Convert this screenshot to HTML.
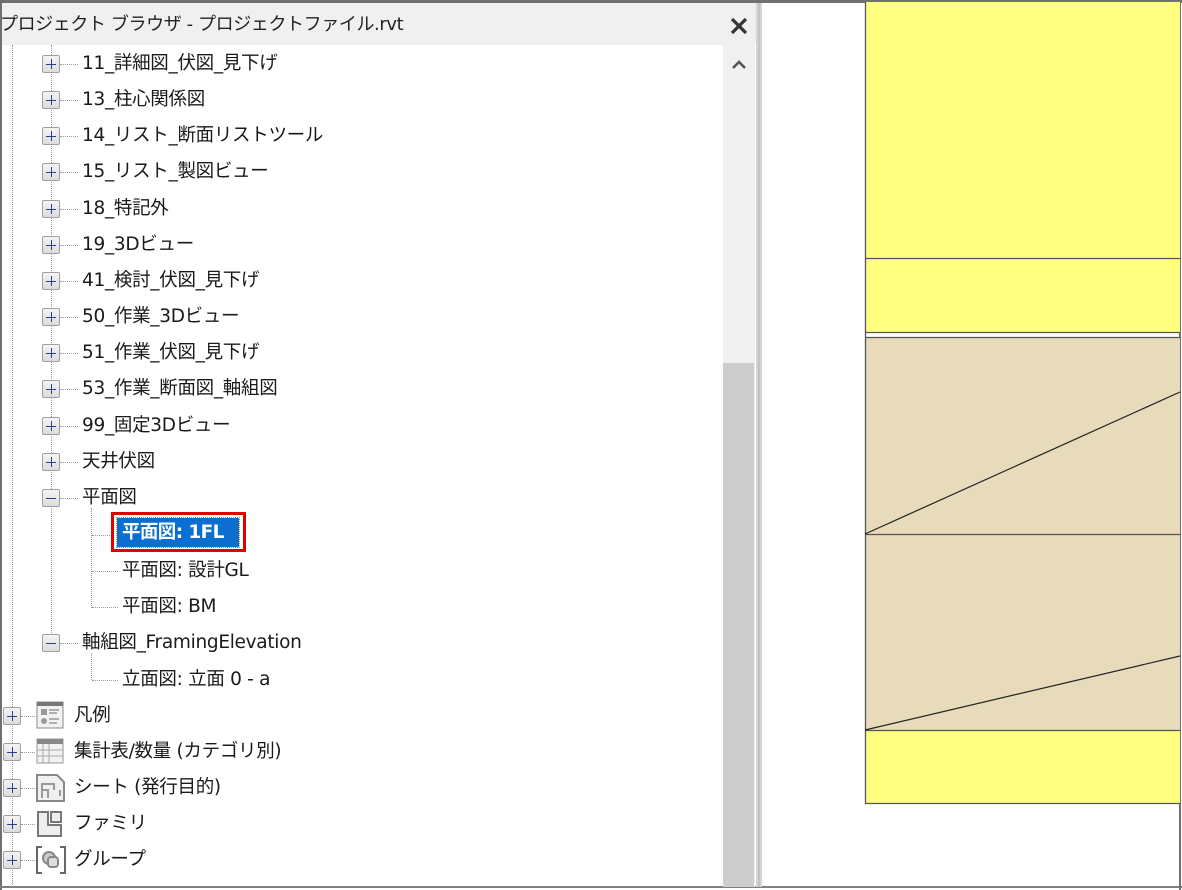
<!DOCTYPE html>
<html><head><meta charset="utf-8">
<style>
*{margin:0;padding:0;box-sizing:border-box}
body{width:1182px;height:890px;overflow:hidden;background:#fff;position:relative;font-family:"DejaVu Sans","Noto Sans CJK JP",sans-serif;color:#1a1a1a}
.a{position:absolute}
.t{position:absolute;font-size:18.5px;letter-spacing:-0.3px;line-height:24px;white-space:nowrap}
.box{position:absolute;width:18px;height:18px;border:1px solid #a0a0a0;border-radius:2px;background:linear-gradient(#f4f4f4,#dcdcdc)}
.box::before{content:"";position:absolute;left:3px;right:3px;top:7.5px;height:1.5px;background:#2b3f8f}
.box.p::after{content:"";position:absolute;top:3px;bottom:3px;left:7.5px;width:1.5px;background:#2b3f8f}
.hd{position:absolute;border-top:1px dotted #999;height:0}
.vd{position:absolute;border-left:1px dotted #999;width:0}
</style></head><body>
<div class="a" style="left:0;top:0;width:1182px;height:3px;background:#707070"></div>
<div class="a" style="left:0;top:0;width:2px;height:890px;background:#707070"></div>
<div class="a" style="left:0;top:886px;width:1182px;height:2px;background:#808080"></div>
<div class="a" style="left:1179px;top:0;width:2px;height:890px;background:#707070"></div>
<div class="a" style="left:2px;top:3px;width:756px;height:42px;background:#f0f0f0"></div>
<div class="t" style="left:0;top:13px;font-size:18px;letter-spacing:-0.4px;color:#222">プロジェクト ブラウザ - プロジェクトファイル.rvt</div>
<svg class="a" style="left:729px;top:16px" width="20" height="20"><path d="M3 3L17 17M17 3L3 17" stroke="#333" stroke-width="3.2"/></svg>
<div class="a" style="left:723px;top:45px;width:32px;height:842px;background:#f0f0f0"></div>
<div class="a" style="left:723px;top:363px;width:31px;height:524px;background:#cdcdcd"></div>
<svg class="a" style="left:730px;top:58px" width="18" height="12"><path d="M3 10L9 4L15 10" stroke="#555" stroke-width="2.6" fill="none"/></svg>
<div class="a" style="left:756px;top:3px;width:6px;height:884px;background:#d4d4d4"></div>
<div class="a" style="left:758px;top:3px;width:2px;height:884px;background:#c4c4c4"></div>
<svg class="a" style="left:864px;top:2px" width="318" height="805">
<rect x="1" y="0" width="315" height="256" fill="#ffff80"/>
<rect x="1" y="256" width="315" height="74" fill="#ffff80"/>
<rect x="1" y="335" width="315" height="393" fill="#e8dbbb"/>
<rect x="1" y="728" width="315" height="73" fill="#ffff80"/>
<g stroke="#555" stroke-width="1.3" fill="none">
<line x1="1.5" y1="0" x2="1.5" y2="802"/>
<line x1="1" y1="256.5" x2="316" y2="256.5"/>
<line x1="1" y1="330.5" x2="316" y2="330.5"/>
<line x1="1" y1="335.5" x2="316" y2="335.5"/>
<line x1="1" y1="532.5" x2="316" y2="532.5"/>
<line x1="1" y1="728.5" x2="316" y2="728.5"/>
<line x1="1" y1="801.5" x2="316" y2="801.5"/>
</g>
<g stroke="#222" stroke-width="1.2"><line x1="1" y1="532" x2="316" y2="390"/><line x1="1" y1="728" x2="316" y2="654"/></g>
</svg>

<div class="vd" style="left:12px;top:45px;height:842px"></div>
<div class="vd" style="left:51px;top:45px;height:598px"></div>
<div class="vd" style="left:91px;top:508px;height:100px"></div>
<div class="vd" style="left:91px;top:653px;height:27px"></div>

<div class="box p" style="left:42px;top:55px"></div><div class="hd" style="left:60px;top:64px;width:18px"></div><div class="t" style="left:82px;top:52px">11_詳細図_伏図_見下げ</div>
<div class="box p" style="left:42px;top:91px"></div><div class="hd" style="left:60px;top:100px;width:18px"></div><div class="t" style="left:82px;top:88px">13_柱心関係図</div>
<div class="box p" style="left:42px;top:127px"></div><div class="hd" style="left:60px;top:136px;width:18px"></div><div class="t" style="left:82px;top:124px">14_リスト_断面リストツール</div>
<div class="box p" style="left:42px;top:163px"></div><div class="hd" style="left:60px;top:172px;width:18px"></div><div class="t" style="left:82px;top:160px">15_リスト_製図ビュー</div>
<div class="box p" style="left:42px;top:200px"></div><div class="hd" style="left:60px;top:209px;width:18px"></div><div class="t" style="left:82px;top:197px">18_特記外</div>
<div class="box p" style="left:42px;top:236px"></div><div class="hd" style="left:60px;top:245px;width:18px"></div><div class="t" style="left:82px;top:233px">19_3Dビュー</div>
<div class="box p" style="left:42px;top:272px"></div><div class="hd" style="left:60px;top:281px;width:18px"></div><div class="t" style="left:82px;top:269px">41_検討_伏図_見下げ</div>
<div class="box p" style="left:42px;top:308px"></div><div class="hd" style="left:60px;top:317px;width:18px"></div><div class="t" style="left:82px;top:305px">50_作業_3Dビュー</div>
<div class="box p" style="left:42px;top:344px"></div><div class="hd" style="left:60px;top:353px;width:18px"></div><div class="t" style="left:82px;top:341px">51_作業_伏図_見下げ</div>
<div class="box p" style="left:42px;top:380px"></div><div class="hd" style="left:60px;top:389px;width:18px"></div><div class="t" style="left:82px;top:377px">53_作業_断面図_軸組図</div>
<div class="box p" style="left:42px;top:417px"></div><div class="hd" style="left:60px;top:426px;width:18px"></div><div class="t" style="left:82px;top:414px">99_固定3Dビュー</div>
<div class="box p" style="left:42px;top:453px"></div><div class="hd" style="left:60px;top:462px;width:18px"></div><div class="t" style="left:82px;top:450px">天井伏図</div>
<div class="box" style="left:42px;top:489px"></div><div class="hd" style="left:60px;top:498px;width:18px"></div><div class="t" style="left:82px;top:486px">平面図</div>
<div class="hd" style="left:92px;top:535px;width:22px"></div>
<div class="a" style="left:111px;top:512px;width:135px;height:40px;border:3px solid #e00000;background:#fff"></div>
<div class="a" style="left:117px;top:518px;width:122px;height:29px;background:#0a6fd0;outline:1px dotted #d08040"></div>
<div class="t" style="left:122px;top:521px;color:#fff;font-weight:bold;letter-spacing:-0.6px">平面図: 1FL</div>
<div class="hd" style="left:92px;top:571px;width:26px"></div><div class="t" style="left:122px;top:559px">平面図: 設計GL</div>
<div class="hd" style="left:92px;top:607px;width:26px"></div><div class="t" style="left:122px;top:595px">平面図: BM</div>
<div class="box" style="left:42px;top:634px"></div><div class="hd" style="left:60px;top:643px;width:18px"></div><div class="t" style="left:82px;top:631px">軸組図_FramingElevation</div>
<div class="hd" style="left:92px;top:680px;width:26px"></div><div class="t" style="left:122px;top:668px">立面図: 立面 0 - a</div>

<div class="box p" style="left:3px;top:707px"></div><div class="hd" style="left:21px;top:716px;width:14px"></div>
<svg class="a" style="left:36px;top:701px" width="28" height="28"><rect x="1" y="1" width="26" height="26" fill="#f2f2f2" stroke="#888"/><rect x="1" y="1" width="26" height="4" fill="#777"/><rect x="5" y="8" width="6" height="6" fill="#999"/><circle cx="8" cy="20" r="3" fill="#999"/><path d="M13 9h10M13 12h8M13 18h10M13 22h8" stroke="#999" stroke-width="1.5"/></svg>
<div class="t" style="left:74px;top:704px">凡例</div>
<div class="box p" style="left:3px;top:743px"></div><div class="hd" style="left:21px;top:752px;width:14px"></div>
<svg class="a" style="left:36px;top:738px" width="28" height="26"><rect x="1" y="1" width="26" height="24" fill="#f2f2f2" stroke="#999"/><rect x="1" y="1" width="26" height="5" fill="#888"/><path d="M1 12h26M1 18h26M7 6v19M13 6v19" stroke="#aaa"/></svg>
<div class="t" style="left:74px;top:740px">集計表/数量 (カテゴリ別)</div>
<div class="box p" style="left:3px;top:779px"></div><div class="hd" style="left:21px;top:788px;width:14px"></div>
<svg class="a" style="left:36px;top:774px" width="30" height="28"><path d="M1 1h20l7 7v19H1z" fill="#f0f0f0" stroke="#888" stroke-width="2"/><path d="M6 24V10h12v6M6 16h6v8" stroke="#999" stroke-width="2" fill="none"/><path d="M24 16v6" stroke="#999" stroke-width="2"/></svg>
<div class="t" style="left:74px;top:776px">シート (発行目的)</div>
<div class="box p" style="left:3px;top:815px"></div><div class="hd" style="left:21px;top:824px;width:14px"></div>
<svg class="a" style="left:36px;top:810px" width="28" height="28"><path d="M2 2h10v13h13v11H2z" fill="#eee" stroke="#777" stroke-width="2"/><path d="M15 2h10v10H15z" fill="#eee" stroke="#777" stroke-width="2"/></svg>
<div class="t" style="left:74px;top:812px">ファミリ</div>
<div class="box p" style="left:3px;top:851px"></div><div class="hd" style="left:21px;top:860px;width:14px"></div>
<svg class="a" style="left:36px;top:846px" width="30" height="28"><path d="M6 1H1v26h5M24 1h5v26h-5" stroke="#666" stroke-width="2" fill="none"/><circle cx="13" cy="12" r="6" fill="#ccc" stroke="#888" stroke-width="2"/><rect x="12" y="11" width="10" height="10" rx="3" fill="#ddd" stroke="#888" stroke-width="2"/></svg>
<div class="t" style="left:74px;top:848px">グループ</div>
</body></html>
